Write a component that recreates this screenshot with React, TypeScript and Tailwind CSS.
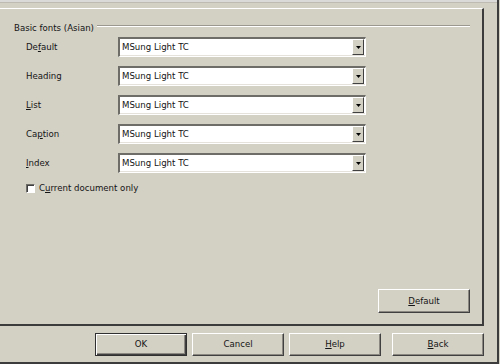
import React from "react";

const rows = [
  { pre: "De", u: "f", post: "ault" },
  { pre: "Headin", u: "g", post: "" },
  { pre: "", u: "L", post: "ist" },
  { pre: "Ca", u: "p", post: "tion" },
  { pre: "", u: "I", post: "ndex" },
];

function Mn({ pre, u, post }: { pre: string; u: string; post: string }) {
  return (
    <span>
      {pre}
      <span className="underline underline-offset-[1px] decoration-[1px]">{u}</span>
      {post}
    </span>
  );
}

function Combo() {
  return (
    <div className="w-[248px] h-[20px] flex bg-white border-t-2 border-l-2 border-t-[#6e6d68] border-l-[#6e6d68] border-b border-r border-b-white border-r-white shadow-[inset_0_-1px_0_#e4e2da]">
      <div className="flex-1 pl-[2px] leading-[17px]">MSung Light TC</div>
      <div className="w-[12px] h-[16px] mt-[0px] mr-[1px] bg-[#d3d0c4] border-t border-l border-t-white border-l-white border-b border-r border-b-[#404040] border-r-[#404040] flex items-center justify-center">
        <svg width="5" height="3" viewBox="0 0 5 3">
          <path d="M0 0h5L2.5 3z" fill="#000" />
        </svg>
      </div>
    </div>
  );
}

function Btn({ children, def }: { children: React.ReactNode; def?: boolean }) {
  return (
    <div
      className={`w-[92px] h-[23px] flex items-center justify-center ${
        def
          ? "border border-[#303030] shadow-[inset_1px_1px_0_#fff,inset_-1px_-1px_0_#404040,inset_-2px_-2px_0_#8a8880]"
          : "border-t border-l border-t-white border-l-white border-b border-r border-b-[#404040] border-r-[#404040] shadow-[inset_-1px_-1px_0_#8a8880]"
      }`}
    >
      {children}
    </div>
  );
}

export default function App() {
  return (
    <div className="w-[500px] h-[364px] bg-[#d3d0c4] flex font-['DejaVu_Sans',sans-serif] text-[8.6px] text-[#141414]">
      <div className="flex-1 flex flex-col">
        <div className="h-[3px] bg-[#dadbd8] border-b border-b-[#bebcb2]" />
        <div className="h-[5px]" />
        <div className="h-[318px] mr-[13px] flex flex-col pl-[14px] pr-[12px] border-t border-t-white border-r-2 border-r-[#3c3c3c] border-b-2 border-b-[#3c3c3c]">
          <div className="mt-[13px] h-[12px] flex items-start">
            <span className="leading-[12px]">Basic fonts (Asian)</span>
            <div className="flex-1 ml-[3px] mt-[3px] h-[2px] border-t border-t-[#9a988f] border-b border-b-white" />
          </div>
          <div className="mt-[3px] flex flex-col gap-[9px] pl-[12px]">
            {rows.map((r) => (
              <div key={r.pre + r.u} className="flex items-center h-[20px]">
                <div className="w-[92px]">
                  <Mn {...r} />
                </div>
                <Combo />
              </div>
            ))}
          </div>
          <div className="mt-[9px] pl-[12px] h-[12px] flex items-center">
            <div className="w-[9px] h-[9px] bg-white border-t border-l border-t-[#6e6d68] border-l-[#6e6d68] border-b border-r border-b-white border-r-white shadow-[inset_1px_1px_0_#404040]" />
            <span className="ml-[4px]">
              <Mn pre="C" u="u" post="rrent document only" />
            </span>
          </div>
          <div className="mt-auto mb-[11px] flex justify-end">
            <div className="w-[92px] h-[24px] flex items-center justify-center border-t border-l border-t-white border-l-white border-b border-r border-b-[#404040] border-r-[#404040] shadow-[inset_-1px_-1px_0_#8a8880]">
              <Mn pre="" u="D" post="efault" />
            </div>
          </div>
        </div>
        <div className="flex-1 flex items-start justify-end pt-[7px] pr-[13px]">
          <Btn def>OK</Btn>
          <div className="w-[5px]" />
          <Btn>Cancel</Btn>
          <div className="w-[5px]" />
          <Btn>
            <Mn pre="" u="H" post="elp" />
          </Btn>
          <div className="w-[11px]" />
          <Btn>
            <Mn pre="" u="B" post="ack" />
          </Btn>
        </div>
        <div className="h-[2px] bg-[#3c3c3c]" />
      </div>
      <div className="w-[2px] bg-[#3c3c3c]" />
      <div className="w-[1px] bg-[#d3d0c4]" />
    </div>
  );
}
